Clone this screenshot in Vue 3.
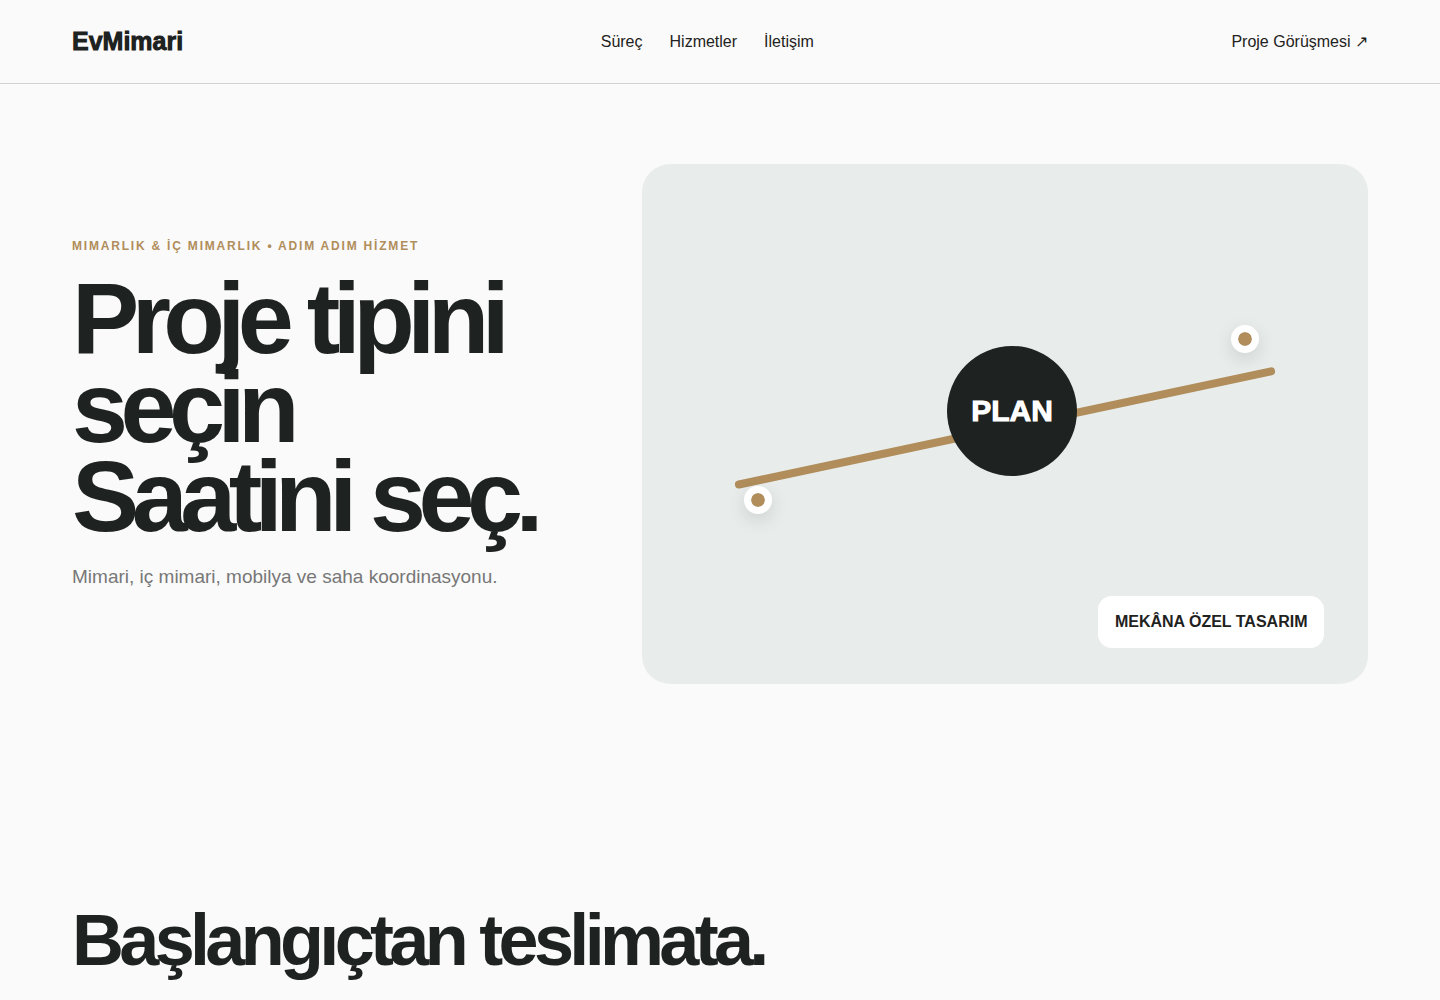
<script setup>
const links = [
  { text: 'Süreç', href: '#surec' },
  { text: 'Hizmetler', href: '#hizmetler' },
  { text: 'İletişim', href: '#iletisim' }
];
</script>

<template>
  <div class="page">
    <header class="header">
      <a class="logo" href="#">EvMimari</a>
      <nav class="nav">
        <a v-for="link in links" :key="link.href" :href="link.href">{{ link.text }}</a>
      </nav>
      <a href="#iletisim">Proje Görüşmesi ↗</a>
    </header>

    <main>
      <section class="hero">
        <div class="hero-text">
          <p class="eyebrow">MIMARLIK &amp; İÇ MIMARLIK • ADIM ADIM HİZMET</p>
          <h1>Proje tipini seçin<br />Saatini seç.</h1>
          <p class="lead">Mimari, iç mimari, mobilya ve saha koordinasyonu.</p>
        </div>

        <div class="board">
          <div class="line"></div>
          <div class="dot dot-start"></div>
          <div class="dot dot-end"></div>
          <div class="plan">PLAN</div>
          <div class="badge">MEKÂNA ÖZEL TASARIM</div>
        </div>
      </section>

      <section id="surec" class="process">
        <h2>Başlangıçtan teslimata.</h2>
      </section>
    </main>
  </div>
</template>

<style>
body {
  margin: 0;
  background: #fafafa;
}
</style>

<style scoped>
.page {
  font-family: "Liberation Sans", Arial, sans-serif;
  font-size: 16px;
  color: #1e2220;
  background: #fafafa;
  overflow: hidden;
}

a {
  color: inherit;
  text-decoration: none;
}

.header {
  display: flex;
  align-items: center;
  justify-content: space-between;
  padding: 27px 5vw;
  border-bottom: 1px solid #d0d2d1;
}

.logo {
  font-size: 25px;
  line-height: 29px;
  font-weight: 950;
}

.nav {
  display: flex;
  gap: 27px;
}

.hero {
  display: grid;
  grid-template-columns: 1fr 1.5fr;
  gap: 6vw;
  align-items: center;
  padding: 80px 5vw;
}

.hero-text {
  padding-bottom: 21px;
}

.eyebrow {
  margin: 0;
  font-size: 12px;
  line-height: 14px;
  font-weight: 700;
  letter-spacing: 0.15em;
  color: #b08d5b;
}

h1 {
  margin: 21px 0 25px;
  font-size: 7vw;
  line-height: 0.88;
  letter-spacing: -0.075em;
}

.lead {
  margin: 0;
  font-size: 19px;
  line-height: 22px;
  color: #777;
}

.board {
  position: relative;
  height: 520px;
  border-radius: 28px;
  background: #e8edeb;
}

.line {
  position: absolute;
  left: 12%;
  top: 50%;
  width: 76%;
  height: 8px;
  border-radius: 8px;
  background: #b08d5b;
  transform: rotate(-12deg);
}

.dot {
  position: absolute;
  width: 14px;
  height: 14px;
  border: 7px solid #fff;
  border-radius: 50%;
  background: #b08d5b;
  background-clip: padding-box;
  box-shadow: 0 6px 18px rgba(0, 0, 0, 0.12);
}

.dot-start {
  left: 14%;
  top: 62%;
}

.dot-end {
  right: 15%;
  top: 31%;
}

.plan {
  position: absolute;
  left: 42%;
  top: 35%;
  display: grid;
  place-items: center;
  width: 130px;
  height: 130px;
  border-radius: 50%;
  background: #1e2220;
  color: #fff;
  font-size: 30px;
  font-weight: 950;
}

.badge {
  position: absolute;
  right: 6%;
  bottom: 7%;
  padding: 17px;
  border-radius: 14px;
  background: #fff;
  line-height: 18px;
  font-weight: 700;
}

.process {
  padding: 140px 5vw;
}

h2 {
  margin: 0;
  font-size: 5vw;
  line-height: 1;
  letter-spacing: -0.065em;
}
</style>
